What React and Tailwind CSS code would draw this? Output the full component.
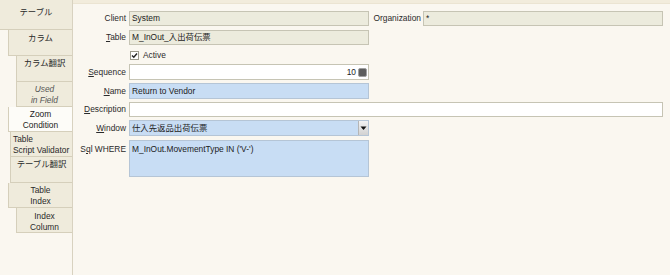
const font = { fontFamily: '"Liberation Sans", "Noto Sans CJK JP", sans-serif' };

function Tab({ children, className = "" }) {
  return (
    <div className={`bg-[#efebdc] border-b border-l border-[#d5cfbb] text-[#2a2a2a] text-center leading-[11px] ${className}`}>
      {children}
    </div>
  );
}

function Label({ children, className = "" }) {
  return <div className={`w-[54px] shrink-0 text-right text-[#2a2a2a] pr-[1px] ${className}`}>{children}</div>;
}

function Field({ children, tone = "gray", className = "" }) {
  const tones = {
    gray: "bg-[#ecebdd] border-[#c6c4b4]",
    blue: "bg-[#c8ddf4] border-[#b5c5d6]",
    white: "bg-white border-[#c6c4b4]",
  };
  return (
    <div className={`ml-[2px] border ${tones[tone]} text-[#1c1c1c] pl-[2px] flex items-center ${className}`}>
      {children}
    </div>
  );
}

export default function App() {
  return (
    <div className="w-[670px] h-[275px] flex bg-[#faf7f0] text-[8.4px] overflow-hidden" style={font}>
      {/* tab strip */}
      <div className="w-[72px] shrink-0 flex flex-col">
        <Tab className="h-[30px] pt-[7px] border-l-0">テーブル</Tab>
        <Tab className="h-[26px] ml-[8px] pt-[3px]">カラム</Tab>
        <Tab className="h-[26px] ml-[16px] pt-[2px]">カラム翻訳</Tab>
        <Tab className="h-[25px] ml-[16px] pt-[2px] italic text-[#555]">
          Used
          <br />
          in Field
        </Tab>
        <div className="h-[25px] ml-[8px] pt-[2px] bg-[#fdfcf8] border-b border-l border-[#d5cfbb] text-[#222] text-center leading-[11px]">
          Zoom
          <br />
          Condition
        </div>
        <Tab className="h-[25px] ml-[10px] pt-[2px] text-left pl-[2px]">
          Table
          <br />
          <span className="whitespace-nowrap">Script Validator</span>
        </Tab>
        <Tab className="h-[26px] ml-[10px] pt-[2px]">テーブル翻訳</Tab>
        <Tab className="h-[25px] ml-[8px] pt-[2px]">
          Table
          <br />
          Index
        </Tab>
        <Tab className="h-[25px] ml-[16px] pt-[3px]">
          Index
          <br />
          Column
        </Tab>
      </div>

      {/* main panel */}
      <div className="flex-1 border-l border-[#d8d2c0] flex flex-col">
        <div className="h-[4px] bg-[#f2ecdc] border-b border-[#ebe4d2]" />
        <div className="flex flex-col pt-[7px]">
          <div className="flex items-center h-[15px]">
            <Label>Client</Label>
            <Field className="w-[240px] h-[15px]">System</Field>
            <div className="w-[52px] text-right text-[#2a2a2a]">Organization</div>
            <Field className="w-[240px] h-[15px]">*</Field>
          </div>
          <div className="flex items-center h-[15px] mt-[4px]">
            <Label>
              <span className="underline">T</span>able
            </Label>
            <Field className="w-[240px] h-[15px]">M_InOut_入出荷伝票</Field>
          </div>
          <div className="flex items-center h-[12px] mt-[4px] pl-[57px]">
            <div className="w-[9px] h-[9px] bg-white border border-[#9c9a8c] flex items-center justify-center">
              <svg width="7" height="7" viewBox="0 0 7 7">
                <path d="M1 3.5 L2.8 5.3 L6 1.5" stroke="#222" strokeWidth="1.4" fill="none" />
              </svg>
            </div>
            <span className="ml-[4px] text-[#2a2a2a]">Active</span>
          </div>
          <div className="flex items-center h-[16px] mt-[3px]">
            <Label>
              <span className="underline">S</span>equence
            </Label>
            <Field tone="white" className="w-[240px] h-[16px] justify-end pr-[1px]">
              <span className="mr-[2px]">10</span>
              <div className="w-[9px] h-[9px] rounded-[2px] bg-[#5d5d5d] border border-[#a0a0a0]" />
            </Field>
          </div>
          <div className="flex items-center h-[16px] mt-[3px]">
            <Label>
              <span className="underline">N</span>ame
            </Label>
            <Field tone="blue" className="w-[240px] h-[16px]">Return to Vendor</Field>
          </div>
          <div className="flex items-center h-[15px] mt-[3px]">
            <Label>
              <span className="underline">D</span>escription
            </Label>
            <Field tone="white" className="w-[534px] h-[15px]" />
          </div>
          <div className="flex items-center h-[16px] mt-[3px]">
            <Label>
              <span className="underline">W</span>indow
            </Label>
            <Field tone="blue" className="w-[240px] h-[16px] pr-0">
              <span className="flex-1">仕入先返品出荷伝票</span>
              <div className="w-[10px] h-full bg-gradient-to-b from-[#f2f2f2] to-[#d2d2d2] border-l border-[#b5b5b5] flex items-center justify-center">
                <svg width="7" height="6" viewBox="0 0 7 6">
                  <path d="M0.5 1.5 H6.5 L3.5 5 Z" fill="#111" />
                </svg>
              </div>
            </Field>
          </div>
          <div className="flex items-start h-[37px] mt-[4px]">
            <Label className="pt-[3px]">
              S<span className="underline">q</span>l WHERE
            </Label>
            <Field tone="blue" className="w-[240px] h-[37px] items-start pt-[2px]">
              M_InOut.MovementType IN ('V-')
            </Field>
          </div>
        </div>
      </div>
    </div>
  );
}
